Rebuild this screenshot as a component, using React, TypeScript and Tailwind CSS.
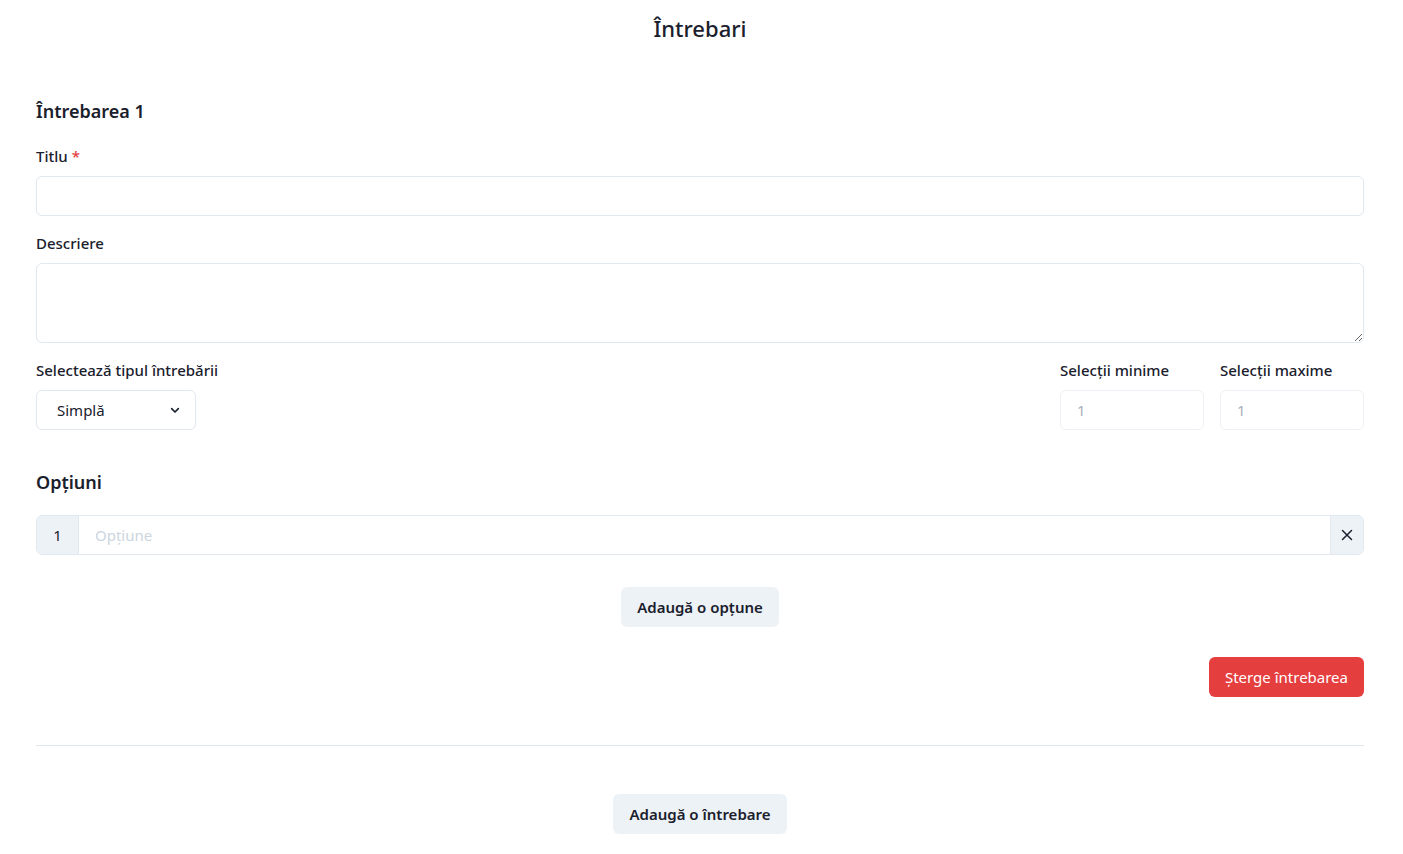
import React from 'react';

const font = { fontFamily: '"Noto Sans", "Open Sans", sans-serif' };

const Label: React.FC<{ children: React.ReactNode; required?: boolean }> = ({ children, required }) => (
  <label className="block text-[15px] leading-6 font-medium text-[#1a202c] mb-2">
    {children}
    {required && <span className="text-[#e53e3e] ml-1">*</span>}
  </label>
);

export default function App() {
  return (
    <div className="min-h-screen bg-white pl-[36px] pr-[39px] text-[#1a202c]" style={font}>
      <h1 className="pt-3 text-center text-[22px] leading-8 font-medium">Întrebari</h1>

      <h2 className="mt-[53px] text-[18px] leading-7 font-semibold">Întrebarea 1</h2>

      <div className="mt-[19px]">
        <Label required>Titlu</Label>
        <input className="block w-full h-10 rounded-md border border-[#e2e8f0] px-4 outline-none" />
      </div>

      <div className="mt-[15px]">
        <Label>Descriere</Label>
        <textarea className="block w-full h-20 rounded-md border border-[#e2e8f0] px-4 py-2 outline-none" />
      </div>

      <div className="mt-[15px] flex items-start justify-between">
        <div>
          <Label>Selectează tipul întrebării</Label>
          <div className="flex h-10 w-[160px] items-center justify-between rounded-md border border-[#e2e8f0] pl-5 pr-3 text-[15px]">
            <span>Simplă</span>
            <svg width="16" height="16" viewBox="0 0 24 24" fill="none" stroke="#1a202c" strokeWidth="2.5" strokeLinecap="round" strokeLinejoin="round">
              <path d="M7 10l5 5 5-5" />
            </svg>
          </div>
        </div>
        <div className="flex gap-4">
          <div className="w-[144px]">
            <Label>Selecții minime</Label>
            <div className="flex h-10 items-center rounded-md border border-[#edf0f4] px-4 text-[15px] text-[#a9afb8]">1</div>
          </div>
          <div className="w-[144px]">
            <Label>Selecții maxime</Label>
            <div className="flex h-10 items-center rounded-md border border-[#edf0f4] px-4 text-[15px] text-[#a9afb8]">1</div>
          </div>
        </div>
      </div>

      <h2 className="mt-[38px] text-[18px] leading-7 font-semibold">Opțiuni</h2>

      <div className="mt-[19px] flex h-10 rounded-md border border-[#e2e8f0] overflow-hidden">
        <div className="flex w-[42px] items-center justify-center bg-[#edf2f7] border-r border-[#e2e8f0] text-[15px]">1</div>
        <div className="flex flex-1 items-center pl-4 text-[15px] text-[#cbd5e0]">Opțiune</div>
        <div className="flex w-[33px] items-center justify-center bg-[#edf2f7] border-l border-[#e2e8f0]">
          <svg width="12" height="12" viewBox="0 0 12 12" stroke="#1a202c" strokeWidth="1.5" strokeLinecap="round">
            <path d="M1.5 1.5l9 9M10.5 1.5l-9 9" />
          </svg>
        </div>
      </div>

      <div className="mt-8 flex justify-center">
        <button className="h-10 rounded-md bg-[#edf2f7] px-4 text-[15px] font-semibold text-[#1a202c]">Adaugă o opțune</button>
      </div>

      <div className="mt-[30px] flex justify-end">
        <button className="h-10 rounded-md bg-[#e53e3e] px-4 text-[15px] font-normal text-white">Șterge întrebarea</button>
      </div>

      <hr className="mt-12 border-t border-[#e2e8f0]" />

      <div className="mt-12 flex justify-center">
        <button className="h-10 rounded-md bg-[#edf2f7] px-4 text-[15px] font-semibold text-[#1a202c]">Adaugă o întrebare</button>
      </div>
    </div>
  );
}
